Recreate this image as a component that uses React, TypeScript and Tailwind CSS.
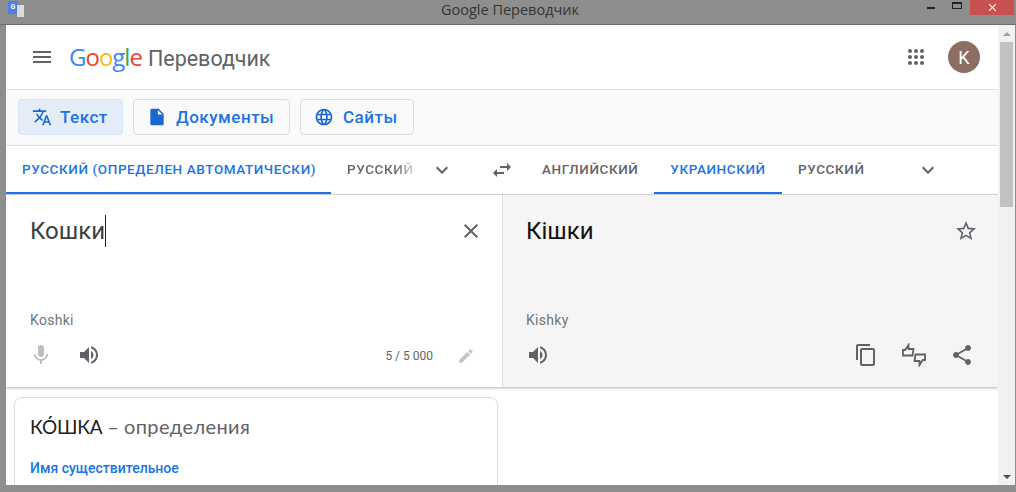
const P = {
  menu: 'M3 18h18v-2H3v2zm0-5h18v-2H3v2zm0-7v2h18V6H3z',
  translate:
    'M12.87 15.07l-2.54-2.51.03-.03c1.74-1.94 2.98-4.17 3.71-6.53H17V4h-7V2H8v2H1v1.99h11.17C11.5 7.92 10.44 9.75 9 11.35 8.07 10.32 7.3 9.19 6.69 8h-2c.73 1.63 1.73 3.17 2.98 4.56l-5.09 5.02L4 19l5-5 3.11 3.11.76-2.04zM18.5 10h-2L12 22h2l1.12-3h4.75L21 22h2l-4.5-12zm-2.62 7l1.62-4.33L19.12 17h-3.24z',
  doc: 'M6 2c-1.1 0-1.99.9-1.99 2L4 20c0 1.1.89 2 1.99 2H18c1.1 0 2-.9 2-2V8l-6-6H6zm7 7V3.5L18.5 9H13z',
  globe:
    'M11.99 2C6.47 2 2 6.48 2 12s4.47 10 9.99 10C17.52 22 22 17.52 22 12S17.52 2 11.99 2zm6.93 6h-2.95c-.32-1.25-.78-2.45-1.38-3.56 1.84.63 3.37 1.91 4.33 3.56zM12 4.04c.83 1.2 1.48 2.53 1.91 3.96h-3.82c.43-1.43 1.08-2.76 1.91-3.96zM4.26 14C4.1 13.36 4 12.69 4 12s.1-1.36.26-2h3.38c-.08.66-.14 1.32-.14 2 0 .68.06 1.34.14 2H4.26zm.82 2h2.95c.32 1.25.78 2.45 1.38 3.56-1.84-.63-3.37-1.9-4.33-3.56zm2.95-8H5.08c.96-1.66 2.49-2.93 4.33-3.56C8.81 5.55 8.35 6.75 8.03 8zM12 19.96c-.83-1.2-1.48-2.53-1.91-3.96h3.82c-.43 1.43-1.08 2.76-1.91 3.96zM14.34 14H9.66c-.09-.66-.16-1.32-.16-2 0-.68.07-1.35.16-2h4.68c.09.65.16 1.32.16 2 0 .68-.07 1.34-.16 2zm.25 5.56c.6-1.11 1.06-2.31 1.38-3.56h2.95c-.96 1.65-2.49 2.93-4.33 3.56zM16.36 14c.08-.66.14-1.32.14-2 0-.68-.06-1.34-.14-2h3.38c.16.64.26 1.31.26 2s-.1 1.36-.26 2h-3.38z',
  chevron: 'M16.59 8.59L12 13.17 7.41 8.59 6 10l6 6 6-6z',
  swap: 'M6.99 11L3 15l3.99 4v-3H14v-2H6.99v-3zM21 9l-3.99-4v3H10v2h7.01v3L21 9z',
  close:
    'M19 6.41L17.59 5 12 10.59 6.41 5 5 6.41 10.59 12 5 17.59 6.41 19 12 13.41 17.59 19 19 17.59 13.41 12z',
  star: 'M22 9.24l-7.19-.62L12 2 9.19 8.63 2 9.24l5.46 4.73L5.82 21 12 17.27 18.18 21l-1.63-7.03L22 9.24zM12 15.4l-3.76 2.27 1-4.28-3.32-2.88 4.38-.38L12 6.1l1.71 4.04 4.38.38-3.32 2.88 1 4.28L12 15.4z',
  mic: 'M12 14c1.66 0 2.99-1.34 2.99-3L15 5c0-1.66-1.34-3-3-3S9 3.34 9 5v6c0 1.66 1.34 3 3 3zm5.3-3c0 3-2.54 5.1-5.3 5.1S6.7 14 6.7 11H5c0 3.41 2.72 6.23 6 6.72V21h2v-3.28c3.28-.48 6-3.3 6-6.72h-1.7z',
  volume:
    'M3 9v6h4l5 5V4L7 9H3zm13.5 3c0-1.77-1.02-3.29-2.5-4.03v8.05c1.48-.73 2.5-2.25 2.5-4.02zM14 3.23v2.06c2.89.86 5 3.54 5 6.71s-2.11 5.85-5 6.71v2.06c4.01-.91 7-4.49 7-8.77s-2.99-7.86-7-8.77z',
  edit: 'M3 17.25V21h3.75L17.81 9.94l-3.75-3.75L3 17.25zM20.71 7.04c.39-.39.39-1.02 0-1.41l-2.34-2.34c-.39-.39-1.02-.39-1.41 0l-1.83 1.83 3.75 3.75 1.83-1.83z',
  copy: 'M16 1H4c-1.1 0-2 .9-2 2v14h2V3h12V1zm3 4H8c-1.1 0-2 .9-2 2v14c0 1.1.9 2 2 2h11c1.1 0 2-.9 2-2V7c0-1.1-.9-2-2-2zm0 16H8V7h11v14z',
  share:
    'M18 16.08c-.76 0-1.44.3-1.96.77L8.91 12.7c.05-.23.09-.46.09-.7s-.04-.47-.09-.7l7.05-4.11c.54.5 1.25.81 2.04.81 1.66 0 3-1.34 3-3s-1.34-3-3-3-3 1.34-3 3c0 .24.04.47.09.7L8.04 9.81C7.5 9.31 6.79 9 6 9c-1.66 0-3 1.34-3 3s1.34 3 3 3c.79 0 1.5-.31 2.04-.81l7.12 4.16c-.05.21-.08.43-.08.65 0 1.61 1.31 2.92 2.92 2.92 1.61 0 2.92-1.31 2.92-2.92s-1.31-2.92-2.92-2.92z',
};

function Icon({ d, className }: { d: string; className?: string }) {
  return (
    <svg viewBox="0 0 24 24" fill="currentColor" className={className}>
      <path d={d} />
    </svg>
  );
}

// thumbs up + thumbs down outlines, the second is the first turned over
function RateIcon() {
  const thumb = 'M1 12.500V7h2.200L6.500 2v4h5l-1 6.500z';
  return (
    <svg viewBox="0 0 24 24" fill="none" stroke="#5f6368" strokeWidth="1.800" className="w-[24px] h-[24px]">
      <path d={thumb} />
      <path d={thumb} transform="rotate(180 12 12)" />
    </svg>
  );
}

function TitleBar() {
  return (
    <div className="h-[24px] shrink-0 flex items-start relative">
      <div className="w-[24px] pl-[8px] pt-[1px] flex">
        <div className="relative w-[16px] h-[16px]">
          <div className="w-[10px] h-[13px] bg-[#4a80ee] text-white text-[7px] font-bold leading-[12px] text-center">
            G
          </div>
          <div className="absolute left-[9px] top-[4px] w-[7px] h-[12px] bg-[#dcdcdc]" />
        </div>
      </div>
      <div className="flex-1 text-center text-[14.500px] leading-[20px] pl-[70px] font-['Open_Sans',sans-serif] text-[#333]">
        Google Переводчик
      </div>
      <div className="flex items-start w-[89px] shrink-0 mr-[1px]">
        <div className="w-[8px] h-[2px] bg-[#222] mt-[7px] ml-[1px]" />
        <div className="w-[10px] h-[7px] border border-[#222] border-t-2 mt-[2px] ml-[17px]" />
        <div className="w-[44px] h-[15px] ml-[8px] bg-[#c75050] flex items-center justify-center">
          <Icon d={P.close} className="w-[13px] h-[13px] text-white" />
        </div>
      </div>
    </div>
  );
}

function Scrollbar() {
  return (
    <div className="w-[17px] shrink-0 bg-[#f1f1f1] flex flex-col items-center">
      <div className="h-[17px] flex items-center justify-center pt-[1px]">
        <div className="w-0 h-0 border-x-[4px] border-x-transparent border-b-[4px] border-b-[#a3a3a3]" />
      </div>
      <div className="w-[13px] h-[165px] bg-[#c1c1c1]" />
      <div className="flex-1" />
      <div className="h-[17px] flex items-center justify-center">
        <div className="w-0 h-0 border-x-[4px] border-x-transparent border-t-[4px] border-t-[#505050]" />
      </div>
    </div>
  );
}

function Tool({ d, label, active, w }: { d: string; label: string; active?: boolean; w: string }) {
  return (
    <div
      className={`${w} h-[36px] rounded-[4px] border flex items-center pl-[13px] text-[#1a73e8] ${
        active ? 'bg-[#e4ecf8] border-[#d2e3fc]' : 'bg-[#fafafa] border-[#dadce0]'
      }`}
    >
      <Icon d={d} className="w-[20px] h-[20px] text-[#1967d2]" />
      <span className={`${active ? 'ml-[8px]' : 'ml-[9px]'} text-[17px] font-medium tracking-[0.5px] leading-none`}>
        {label}
      </span>
    </div>
  );
}

export default function App() {
  return (
    <div className="w-[1016px] h-[492px] overflow-hidden bg-[#8e8e8e] flex flex-col font-['Roboto',sans-serif]">
      <TitleBar />
      <div className="h-[461px] flex pl-[6px] pr-[1px] border-t border-[#6e6e6e]">
        <main className="flex-1 min-w-0 bg-white overflow-hidden">
          {/* header */}
          <header className="h-[64px] flex items-center border-b border-[#e0e0e0] pl-[24px] pr-[18px] box-content">
            <Icon d={P.menu} className="w-[24px] h-[24px] text-[#5f6368]" />
            <div className="ml-[15px] flex items-baseline leading-none">
              <span className="font-['Open_Sans',sans-serif] text-[24px] tracking-[-1px] font-medium">
                <span className="text-[#4285f4]">G</span>
                <span className="text-[#ea4335]">o</span>
                <span className="text-[#fbbc05]">o</span>
                <span className="text-[#4285f4]">g</span>
                <span className="text-[#34a853]">l</span>
                <span className="text-[#ea4335]">e</span>
              </span>
              <span className="ml-[6px] text-[#5f6368] text-[21.500px]">Переводчик</span>
            </div>
            <div className="flex-1" />
            <div className="grid grid-cols-3 gap-[2px] w-[16px] mr-[24px]">
              {Array.from({ length: 9 }).map((_, i) => (
                <div key={i} className="w-[4px] h-[4px] rounded-full bg-[#5f6368]" />
              ))}
            </div>
            <div className="w-[32px] h-[32px] rounded-full bg-[#8d6e63] text-white text-[18px] flex items-center justify-center">
              K
            </div>
          </header>

          {/* toolbar */}
          <div className="h-[46px] bg-[#fafafa] border-b border-[#e0e0e0] box-content flex items-start pt-[9px] pl-[12px] gap-[10px]">
            <Tool d={P.translate} label="Текст" active w="w-[105px]" />
            <Tool d={P.doc} label="Документы" w="w-[157px]" />
            <Tool d={P.globe} label="Сайты" w="w-[114px]" />
          </div>

          {/* language tabs */}
          <div className="h-[48px] border-b border-[#dadce0] box-content flex text-[13.500px] font-medium uppercase text-[#5f6368] tracking-[0.6px]">
            <div className="w-[325px] h-[48px] border-b-2 border-[#1a73e8] text-[#1a73e8] pl-[16px] flex items-center whitespace-nowrap">
              Русский (определен автоматически)
            </div>
            <div className="w-[82px] pl-[16px] pb-[1px] flex items-center">
              <span className="bg-gradient-to-r from-[#5f6368] from-70% to-[#d8d8d8] bg-clip-text text-transparent">
                Русский
              </span>
            </div>
            <div className="w-[59px] flex items-center pl-[17px]">
              <Icon d={P.chevron} className="w-[24px] h-[24px]" />
            </div>
            <div className="w-[70px] flex items-center pl-[18px]">
              <Icon d={P.swap} className="w-[24px] h-[24px]" />
            </div>
            <div className="w-[112px] pb-[1px] flex items-center">Английский</div>
            <div className="w-[128px] h-[48px] border-b-2 border-[#1a73e8] text-[#1a73e8] flex items-center justify-center">
              Украинский
            </div>
            <div className="w-[134px] pl-[16px] pb-[1px] flex items-center">Русский</div>
            <div className="flex items-center">
              <Icon d={P.chevron} className="w-[24px] h-[24px]" />
            </div>
          </div>

          {/* panels */}
          <div className="h-[192px] flex shadow-[0_1px_3px_rgba(0,0,0,0.3)] relative">
            <section className="w-[497px] border-r border-[#dadce0] flex flex-col pl-[24px] pr-[19px]">
              <div className="h-[72px] flex items-start pt-[20px]">
                <span className="text-[24px] leading-[32px] text-[#3c4043] border-r border-[#222]">Кошки</span>
                <div className="flex-1" />
                <Icon d={P.close} className="w-[24px] h-[24px] text-[#5f6368] mt-[4px]" />
              </div>
              <div className="flex-1" />
              <div className="text-[14px] tracking-[0.3px] leading-[20px] text-[#70757a]">Koshki</div>
              <div className="h-[57px] pt-[13px] flex items-start -ml-[1px]">
                <Icon d={P.mic} className="w-[24px] h-[24px] text-[#bdbdbd]" />
                <Icon d={P.volume} className="w-[24px] h-[24px] text-[#5f6368] ml-[24px]" />
                <div className="flex-1" />
                <span className="text-[12px] leading-[20px] mt-[3px] text-[#5f6368]">5 / 5 000</span>
                <Icon d={P.edit} className="w-[18px] h-[18px] text-[#c4c4c4] ml-[24px] mt-[4px] mr-[8px]" />
              </div>
            </section>
            <section className="flex-1 bg-[#f5f5f5] flex flex-col pl-[24px] pr-[20px]">
              <div className="h-[72px] flex items-start pt-[20px]">
                <span className="text-[24px] leading-[32px] text-[#111] -ml-[1px]">Кішки</span>
                <div className="flex-1" />
                <Icon d={P.star} className="w-[24px] h-[24px] text-[#5f6368] mt-[4px]" />
              </div>
              <div className="flex-1" />
              <div className="text-[14px] tracking-[0.3px] leading-[20px] text-[#70757a] -ml-[1px]">Kishky</div>
              <div className="h-[57px] pt-[13px] flex items-start -ml-[1px] pr-[4px]">
                <Icon d={P.volume} className="w-[24px] h-[24px] text-[#5f6368]" />
                <div className="flex-1" />
                <Icon d={P.copy} className="w-[24px] h-[24px] text-[#5f6368]" />
                <div className="ml-[24px]">
                  <RateIcon />
                </div>
                <Icon d={P.share} className="w-[24px] h-[24px] text-[#5f6368] ml-[24px]" />
              </div>
            </section>
          </div>

          {/* definitions card */}
          <div className="pl-[8px] pt-[10px]">
            <div className="w-[484px] h-[120px] rounded-[8px] border border-[#dadce0] pl-[15px] pt-[14px]">
              <div className="flex items-baseline font-['Lato',sans-serif] text-[20px] leading-[28px]">
                <span className="text-[#202124] text-[19px] tracking-[-0.2px]">КО́ШКА</span>
                <span className="text-[#5f6368] ml-[5px]">–</span>
                <span className="text-[#5f6368] ml-[5px] tracking-[0.4px]">определения</span>
              </div>
              <div className="mt-[17px] text-[14px] leading-[20px] text-[#1a73e8] font-medium">Имя существительное</div>
            </div>
          </div>
        </main>
        <Scrollbar />
      </div>
    </div>
  );
}
